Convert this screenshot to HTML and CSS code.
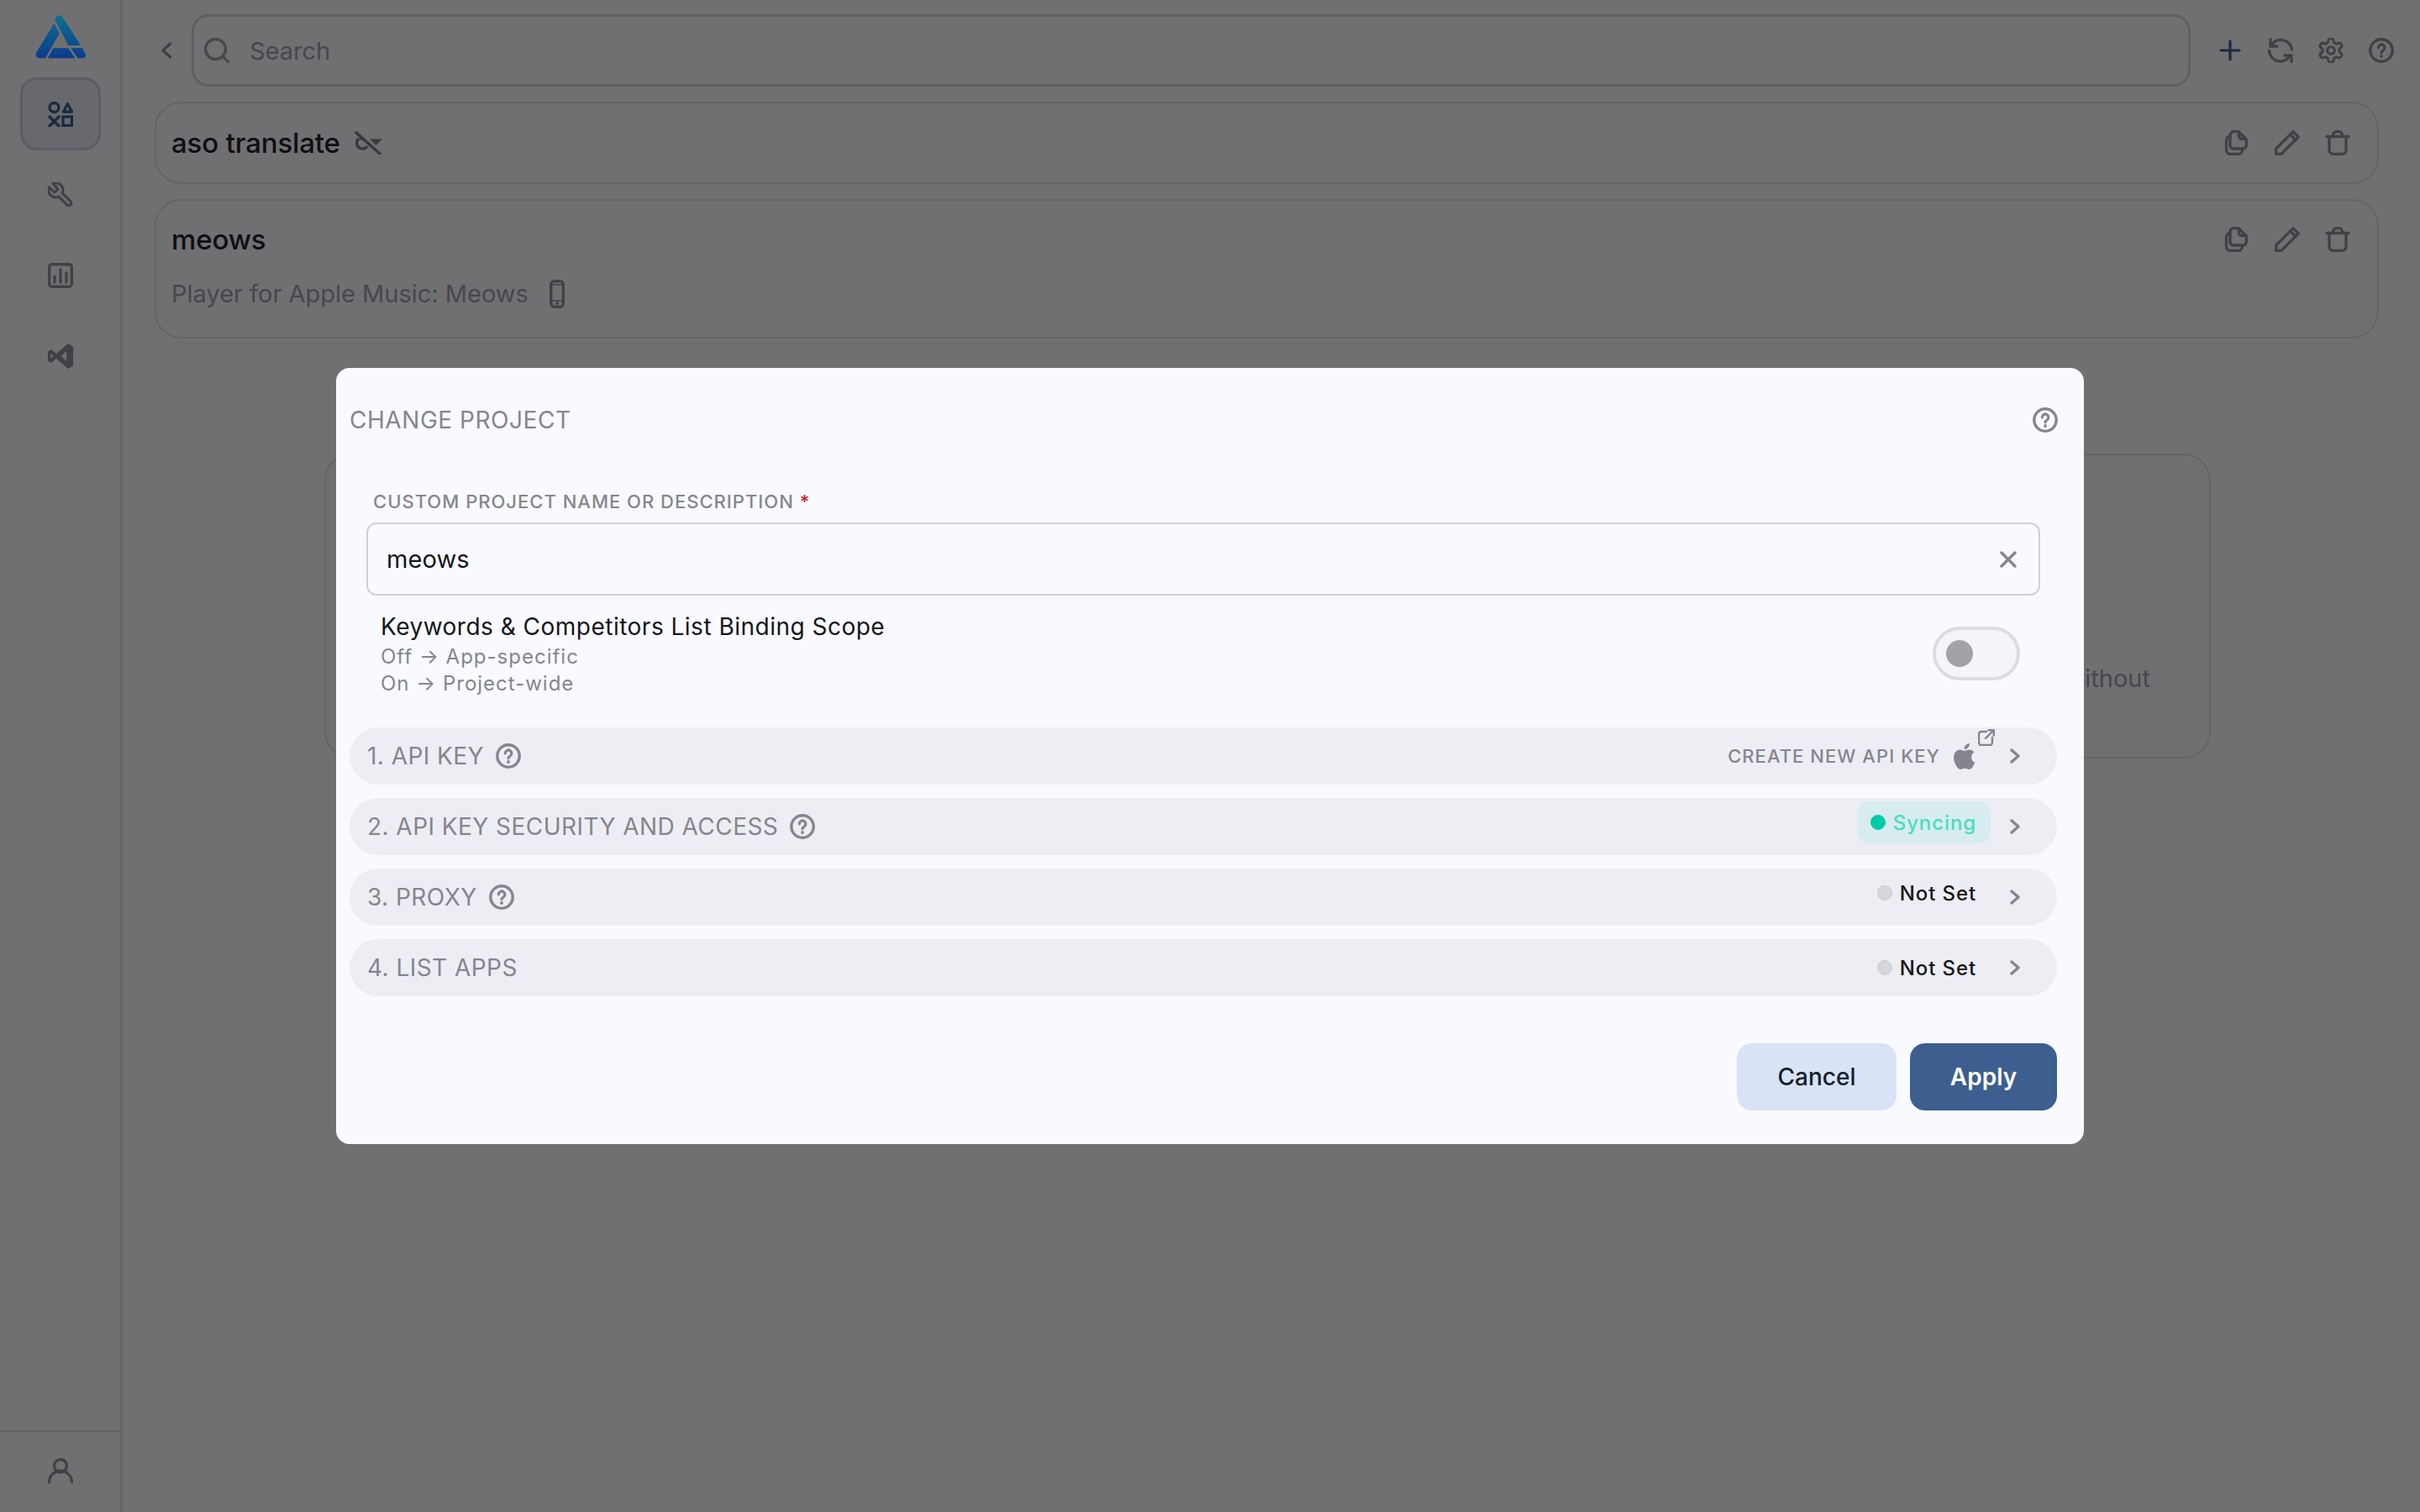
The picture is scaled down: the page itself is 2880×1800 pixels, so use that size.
FILE: index.html
```html
<!DOCTYPE html>
<html lang="en">
<head>
<meta charset="utf-8">
<title>Change project</title>
<link rel="stylesheet" href="styles.css">
</head>
<body>
<svg class="defs" width="0" height="0" aria-hidden="true">
  <symbol id="i-help" viewBox="0 0 30 30"><circle cx="15" cy="15" r="13.200" fill="none" stroke="currentColor" stroke-width="3.400"/><path d="M11.300 11.800a3.800 3.800 0 1 1 5.700 3.300c-1.300.7-2 1.400-2 2.600" fill="none" stroke="currentColor" stroke-width="3.200" stroke-linecap="round"/><circle cx="15" cy="22" r="1.900" fill="currentColor"/></symbol>
  <symbol id="i-chev" viewBox="0 0 12 18"><path d="M2 2l8 7-8 7" fill="none" stroke="currentColor" stroke-width="3.400" stroke-linecap="round" stroke-linejoin="round"/></symbol>
  <symbol id="i-copy" viewBox="0 0 30 30"><g fill="none" stroke="currentColor" stroke-width="3.300" stroke-linecap="round" stroke-linejoin="round"><path d="M11 1.700h6l9.300 9.300v7a4 4 0 0 1-4 4H11a4 4 0 0 1-4-4V5.700a4 4 0 0 1 4-4z"/><path d="M17.500 2v5a3.500 3.500 0 0 0 3.500 3.500h5"/><path d="M7 7.500a4.500 4.500 0 0 0-4.500 4.500v12a4.500 4.500 0 0 0 4.500 4.300h10a4.500 4.500 0 0 0 4.500-4.300"/></g></symbol>
  <symbol id="i-pen" viewBox="0 0 30 30"><g fill="none" stroke="currentColor" stroke-width="3.300" stroke-linejoin="round" stroke-linecap="round"><path d="M1.700 28.300v-6.300L22 1.700l6.300 6.300L8 28.300z"/><path d="M18.500 5l6.500 6.500"/></g></symbol>
  <symbol id="i-trash" viewBox="0 0 30 30"><g fill="none" stroke="currentColor" stroke-width="3.300" stroke-linecap="round" stroke-linejoin="round"><path d="M2 7.500h26"/><path d="M9.500 7.500V6a4.300 4.300 0 0 1 4.300-4.300h2.400A4.300 4.300 0 0 1 20.500 6v1.500"/><path d="M5 7.500V24a4.300 4.300 0 0 0 4.300 4.300h11.400A4.300 4.300 0 0 0 25 24V7.500"/></g></symbol>
</svg>

<div class="app">
  <aside class="rail">
    <svg class="logo" viewBox="0 0 252 210" width="84" height="70" aria-label="Logo">
      <defs><linearGradient id="logo-g" gradientUnits="userSpaceOnUse" x1="0" y1="22" x2="0" y2="180"><stop offset="0" stop-color="#0c7390"/><stop offset="1" stop-color="#0c3a8c"/></linearGradient></defs>
      <path fill="url(#logo-g)" d="M105 38c5-11 13-16 22-12 4 2 7 5 9 9l62 97h-44z"/>
      <path fill="url(#logo-g)" d="M103 54l19 35-50 89H52c-11 0-18-11-12-21z"/>
      <path fill="url(#logo-g)" d="M100 142h54l24 36H80z"/>
      <path fill="url(#logo-g)" d="M163 142h41l11 21c4 8-2 15-10 15h-17z"/>
    </svg>
    <nav class="rail-nav">
      <a class="rail-item rail-item-active">
        <svg class="ic30" viewBox="0 0 30 30"><g fill="none" stroke="currentColor" stroke-width="3.300"><circle cx="7.500" cy="7" r="5.500"/><path d="M23.500 2.500l5 9.500h-10z" stroke-linejoin="round"/><path d="M2 18l11 11M13 18L2 29" stroke-linecap="round"/><rect x="18" y="18" width="10.500" height="10.500"/></g></svg>
      </a>
      <a class="rail-item">
        <svg class="ic30" viewBox="1.500 1.500 21 21"><path transform="translate(24 0) scale(-1 1)" d="M14.700 6.300a1 1 0 0 0 0 1.400l1.600 1.600a1 1 0 0 0 1.400 0l3.770-3.770a6 6 0 0 1-7.940 7.940l-6.910 6.910a2.120 2.120 0 0 1-3-3l6.910-6.910a6 6 0 0 1 7.940-7.940l-3.760 3.760z" fill="none" stroke="currentColor" stroke-width="2.200" stroke-linejoin="round"/></svg>
      </a>
      <a class="rail-item">
        <svg class="ic30" viewBox="0 0 30 30"><rect x="1.700" y="1.700" width="26.600" height="26.600" rx="3" fill="none" stroke="currentColor" stroke-width="3.400"/><path d="M8 16v7M15 8v15M22 12v11" stroke="currentColor" stroke-width="3.300" stroke-linecap="round"/></svg>
      </a>
      <a class="rail-item">
        <svg class="ic30" viewBox="0 0 30 30"><path fill="currentColor" fill-rule="evenodd" d="M24 0l6 3.500v23L24 30 10 18l-6 5-4-2.500v-11L4 7l6 5zM22 9l-6 6 6 6zM3.500 12v6l3-3z"/></svg>
      </a>
    </nav>
    <div class="rail-foot">
      <svg class="ic30" viewBox="0 0 30 30"><g fill="none" stroke="currentColor" stroke-width="3.300" stroke-linecap="round"><circle cx="15" cy="9" r="7.500"/><path d="M1.500 28.500a13.500 13.500 0 0 1 27 0"/></g></svg>
    </div>
  </aside>

  <main class="main">
    <div class="toolbar">
      <button class="back"><svg class="ic-back" viewBox="0 0 12 20"><path d="M10.500 2L2 10l8.500 8" fill="none" stroke="currentColor" stroke-width="3.400" stroke-linecap="round" stroke-linejoin="round"/></svg></button>
      <div class="search">
        <svg class="ic30" viewBox="0 0 30 30"><circle cx="13.500" cy="13.500" r="12" fill="none" stroke="currentColor" stroke-width="3.300"/><path d="M23 23l6 6" stroke="currentColor" stroke-width="3.300" stroke-linecap="round"/></svg>
        <span class="search-text">Search</span>
      </div>
      <div class="tools">
        <svg class="ic30 navy" viewBox="0 0 30 30"><path d="M15 4v22M4 15h22" stroke="currentColor" stroke-width="3.200" stroke-linecap="round"/></svg>
        <svg class="ic30" viewBox="0 0 30 30"><g fill="none" stroke="currentColor" stroke-width="3.300" stroke-linecap="round" stroke-linejoin="round"><path d="M3.500 9.500A13.300 13.300 0 0 1 28.500 14"/><path d="M3 2v8h8"/><path d="M1.500 15.500A13.300 13.300 0 0 0 26.500 21"/><path d="M28 29v-8h-8"/></g></svg>
        <svg class="ic30" viewBox="1.500 1.500 21 21"><g fill="none" stroke="currentColor" stroke-width="2.200" stroke-linejoin="round"><path d="M12.220 2h-.44a2 2 0 0 0-2 2v.18a2 2 0 0 1-1 1.730l-.43.25a2 2 0 0 1-2 0l-.15-.08a2 2 0 0 0-2.730.73l-.22.38a2 2 0 0 0 .73 2.730l.15.1a2 2 0 0 1 1 1.720v.51a2 2 0 0 1-1 1.740l-.15.09a2 2 0 0 0-.73 2.730l.22.38a2 2 0 0 0 2.730.73l.15-.08a2 2 0 0 1 2 0l.43.25a2 2 0 0 1 1 1.730V20a2 2 0 0 0 2 2h.44a2 2 0 0 0 2-2v-.18a2 2 0 0 1 1-1.730l.43-.25a2 2 0 0 1 2 0l.15.08a2 2 0 0 0 2.730-.73l.22-.39a2 2 0 0 0-.73-2.730l-.15-.08a2 2 0 0 1-1-1.740v-.5a2 2 0 0 1 1-1.740l.15-.09a2 2 0 0 0 .73-2.730l-.22-.38a2 2 0 0 0-2.730-.73l-.15.08a2 2 0 0 1-2 0l-.43-.25a2 2 0 0 1-1-1.730V4a2 2 0 0 0-2-2z"/><circle cx="12" cy="12" r="3"/></g></svg>
        <svg class="ic30"><use href="#i-help"/></svg>
      </div>
    </div>

    <section class="card card-one">
      <div class="card-title-row">
        <h2 class="card-title">aso translate</h2>
        <svg class="ic-eye" viewBox="0 0 34 28"><path d="M3 2l28 25" stroke="currentColor" stroke-width="3.600" stroke-linecap="round"/><path d="M6 9a6.800 6.800 0 1 0 10 9" fill="none" stroke="currentColor" stroke-width="3.600"/><path d="M7 8l6 2.500" stroke="currentColor" stroke-width="3.600"/><path d="M19 9.500h15l-7.500 7.500z" fill="currentColor"/></svg>
      </div>
      <div class="card-actions">
        <svg class="ic30"><use href="#i-copy"/></svg>
        <svg class="ic30"><use href="#i-pen"/></svg>
        <svg class="ic30"><use href="#i-trash"/></svg>
      </div>
    </section>

    <section class="card card-two">
      <div class="card-body">
        <h2 class="card-title">meows</h2>
        <p class="card-sub">Player for Apple Music: Meows
          <svg class="ic-phone" viewBox="0 0 18 34"><rect x="1.700" y="1.700" width="14.600" height="30.600" rx="4" fill="none" stroke="currentColor" stroke-width="3.400"/><circle cx="9" cy="28" r="1.800" fill="currentColor"/><path d="M3 6h12M3 25h12" stroke="currentColor" stroke-width="1.500"/></svg>
        </p>
      </div>
      <div class="card-actions">
        <svg class="ic30"><use href="#i-copy"/></svg>
        <svg class="ic30"><use href="#i-pen"/></svg>
        <svg class="ic30"><use href="#i-trash"/></svg>
      </div>
    </section>

    <section class="empty-card"><span class="empty-text">without</span></section>
  </main>
</div>

<div class="overlay">
  <div class="modal" role="dialog">
    <header class="modal-head">
      <h1 class="modal-title">CHANGE PROJECT</h1>
      <svg class="ic30 muted"><use href="#i-help"/></svg>
    </header>

    <div class="field">
      <label class="field-label">CUSTOM PROJECT NAME OR DESCRIPTION <span class="req">*</span></label>
      <div class="input">
        <span class="input-value">meows</span>
        <svg class="ic-x" viewBox="0 0 20 20"><path d="M2 2l16 16M18 2L2 18" stroke="currentColor" stroke-width="3.400" stroke-linecap="round"/></svg>
      </div>
    </div>

    <div class="scope">
      <div>
        <div class="scope-title">Keywords &amp; Competitors List Binding Scope</div>
        <div class="scope-sub">Off → App-specific</div>
        <div class="scope-sub">On → Project-wide</div>
      </div>
      <span class="toggle"><span class="toggle-knob"></span></span>
    </div>

    <div class="steps">
      <div class="step">
        <span class="step-name">1. API KEY</span>
        <svg class="ic30 muted"><use href="#i-help"/></svg>
        <span class="step-link">CREATE NEW API KEY</span>
        <span class="apple">
          <svg class="ic-apple" viewBox="2.500 0 19.500 24"><path fill="currentColor" d="M12.152 6.896c-.948 0-2.415-1.078-3.960-1.040-2.040.027-3.910 1.183-4.961 3.014-2.117 3.675-.546 9.103 1.519 12.090 1.013 1.454 2.208 3.090 3.792 3.039 1.520-.065 2.090-.987 3.935-.987 1.831 0 2.350.987 3.960.948 1.637-.026 2.676-1.480 3.676-2.948 1.156-1.688 1.636-3.325 1.662-3.415-.039-.013-3.182-1.221-3.220-4.857-.026-3.040 2.480-4.494 2.597-4.559-1.429-2.090-3.623-2.324-4.390-2.376-2-.156-3.675 1.090-4.610 1.090zM15.530 3.830c.843-1.012 1.400-2.427 1.245-3.830-1.207.052-2.662.805-3.532 1.818-.780.896-1.454 2.338-1.273 3.714 1.338.104 2.715-.688 3.559-1.701"/></svg>
          <svg class="ic-ext" viewBox="0 0 20 20"><path d="M10 3H4a3 3 0 0 0-3 3v10a3 3 0 0 0 3 3h10a3 3 0 0 0 3-3v-6M9 11l9.500-9.500M12.500 1.200h6.300v6.300" fill="none" stroke="currentColor" stroke-width="2.400" stroke-linecap="round" stroke-linejoin="round"/></svg>
        </span>
        <svg class="ic-chev"><use href="#i-chev"/></svg>
      </div>
      <div class="step">
        <span class="step-name">2. API KEY SECURITY AND ACCESS</span>
        <svg class="ic30 muted"><use href="#i-help"/></svg>
        <span class="status status-sync status-raised"><span class="dot dot-sync"></span>Syncing</span>
        <svg class="ic-chev"><use href="#i-chev"/></svg>
      </div>
      <div class="step">
        <span class="step-name">3. PROXY</span>
        <svg class="ic30 muted"><use href="#i-help"/></svg>
        <span class="status status-raised"><span class="dot"></span>Not Set</span>
        <svg class="ic-chev"><use href="#i-chev"/></svg>
      </div>
      <div class="step">
        <span class="step-name">4. LIST APPS</span>
        <span class="status"><span class="dot"></span>Not Set</span>
        <svg class="ic-chev"><use href="#i-chev"/></svg>
      </div>
    </div>

    <footer class="modal-foot">
      <button class="btn btn-soft">Cancel</button>
      <button class="btn btn-solid">Apply</button>
    </footer>
  </div>
</div>
</body>
</html>
```
FILE: styles.css
```css
* { box-sizing: border-box; }
html, body { margin: 0; height: 100%; }
body {
  font-family: Inter, "Noto Sans", sans-serif;
  background: #fafbff;
  color: #202329;
  overflow: hidden;
}
.defs { display: block; position: absolute; }
h1, h2, p { margin: 0; font: inherit; }
button { font: inherit; border: 0; background: none; padding: 0; }
svg { display: block; flex: none; }
.ic30 { width: 30px; height: 30px; }
.navy { color: #3c5f8f; }
.muted { color: #85868d; }

/* app shell */
.app { display: flex; height: 100vh; }
.rail {
  width: 146px; flex: none;
  display: flex; flex-direction: column; align-items: stretch;
  padding-top: 10px;
  border-right: 3px solid #dfe0e5;
  color: #8f929b;
}
.logo { position: relative; z-index: 2; margin-left: 30px; }
.rail-nav { display: flex; flex-direction: column; gap: 9px; margin: 12px 23px 0 24px; }
.rail-item { height: 87px; display: flex; align-items: center; justify-content: center; border-radius: 20px; border: 3px solid transparent; }
.rail-item-active { background: #e6eaf3; border-color: #c9d0de; color: #3c5f8f; }
.rail-foot { margin-top: auto; height: 97px; padding-bottom: 4px; border-top: 2px solid #dfe0e5; display: flex; align-items: center; justify-content: center; }

.main { flex: 1; min-width: 0; padding: 17px 49px 0 38px; }
.toolbar { display: flex; align-items: center; height: 86px; margin-right: -18px; }
.back { width: 44px; flex: none; color: #8f929b; display: flex; padding-left: 8px; }
.ic-back { width: 12px; height: 20px; }
.search {
  flex: 1; height: 86px; display: flex; align-items: center; gap: 24px;
  padding: 0 12px; border: 3px solid #d5d7dd; border-radius: 20px; color: #9ea1aa;
}
.search-text { font-size: 29px; }
.tools { display: flex; gap: 30px; margin-left: 32px; color: #8f929b; }

.card { display: flex; border: 2px solid #e0e1e6; border-radius: 32px; padding: 0 32px 0 18px; justify-content: space-between; }
.card-one { height: 98px; margin-top: 18px; align-items: center; }
.card-two { height: 166px; margin-top: 18px; padding-top: 26px; align-items: flex-start; }
.card-two .card-actions { margin-top: 5px; }
.card-title-row { display: flex; align-items: center; gap: 16px; }
.card-title { font-size: 33px; line-height: 40px; font-weight: 500; letter-spacing: -.15px; color: #202329; }
.card-sub { display: flex; align-items: center; gap: 25px; margin-top: 25px; font-size: 29px; line-height: 40px; color: #9ea1aa; }
.card-actions { display: flex; gap: 30px; color: #8f929b; }
.ic-eye { width: 34px; height: 28px; color: #80838c; }
.ic-phone { width: 18px; height: 34px; color: #8f929b; }
.empty-card {
  display: flex; flex-direction: column; align-items: flex-end; justify-content: flex-end;
  height: 363px; margin: 137px 200px 0 202px; padding: 0 70px 73px 0;
  border: 2px solid #e0e1e6; border-radius: 32px;
}
.empty-text { font-size: 29px; line-height: 40px; color: #9ea1aa; }

/* modal */
.overlay { position: fixed; inset: 0; z-index: 1; background: rgba(0, 0, 0, .552); display: flex; align-items: center; justify-content: center; }
.modal { width: 2080px; height: 924px; background: #f9faff; border-radius: 16px; padding: 44px 32px 40px 16px; color: #14161b; }
.modal-head { display: flex; align-items: center; justify-content: space-between; height: 36px; margin-right: -1px; }
.modal-title { font-size: 28px; line-height: 36px; font-weight: 400; color: #85868d; letter-spacing: .55px; }

.field { margin: 68px 20px 0 20px; }
.field-label { display: block; margin-left: 8px; font-size: 22px; line-height: 22px; font-weight: 500; letter-spacing: 1px; color: #85868d; }
.req { color: #c0222c; }
.input { display: flex; align-items: center; justify-content: space-between; height: 87px; margin-top: 14px; padding: 0 26px 0 22px; border: 2px solid #d0d1d6; border-radius: 12px; }
.input-value { font-size: 29px; letter-spacing: .1px; }
.ic-x { width: 20px; height: 20px; color: #85868d; }

.scope { display: flex; align-items: center; justify-content: space-between; margin-top: 19px; padding: 0 44px 0 37px; }
.scope-title { font-size: 28px; line-height: 36px; letter-spacing: .49px; margin-bottom: 2px; }
.scope-sub { font-size: 24px; line-height: 32px; letter-spacing: 1px; color: #85868d; }
.toggle { width: 104px; height: 64px; margin-bottom: 2px; border: 4px solid #dcdde1; border-radius: 32px; background: #f4f5f9; display: flex; align-items: center; padding-left: 12px; }
.toggle-knob { width: 32px; height: 32px; border-radius: 50%; background: #a2a3a9; }

.steps { display: flex; flex-direction: column; gap: 16px; margin-top: 36px; }
.step { height: 68px; display: flex; align-items: center; padding: 0 44px 0 21px; background: #edeef3; border-radius: 34px; color: #85868d; }
.step-name { font-size: 28px; letter-spacing: .45px; margin-right: 14px; }
.step-link { margin-left: auto; font-size: 22px; font-weight: 500; letter-spacing: 1.050px; }
.apple { position: relative; margin: 0 41px 0 16px; }
.ic-apple { width: 26px; height: 31px; color: #85868d; }
.ic-ext { position: absolute; left: 29px; top: -17px; width: 20px; height: 20px; }
.ic-chev { width: 12px; height: 18px; color: #85868d; }
.status { margin-left: auto; margin-right: 23px; height: 50px; display: flex; align-items: center; gap: 9px; padding: 0 17px 0 16px; border-radius: 14px; font-size: 24px; font-weight: 500; letter-spacing: .9px; color: #14161b; }
.status-raised { margin-bottom: 10px; }
.status-sync { background: #d6ecee; color: #4bdcc0; padding-left: 16px; }
.dot { width: 18px; height: 18px; border-radius: 50%; background: #d6d7dc; border: 1px solid #cbccd1; }
.dot-sync { background: #00cba6; border-color: #00cba6; }

.modal-foot { display: flex; justify-content: flex-end; gap: 16px; margin-top: 56px; }
.btn { height: 80px; border-radius: 18px; font-size: 28px; font-weight: 500; }
.btn-soft { width: 190px; background: #d8e3f6; color: #14202e; }
.btn-solid { width: 175px; background: #3c5f8f; color: #fff; font-weight: 600; }
```
